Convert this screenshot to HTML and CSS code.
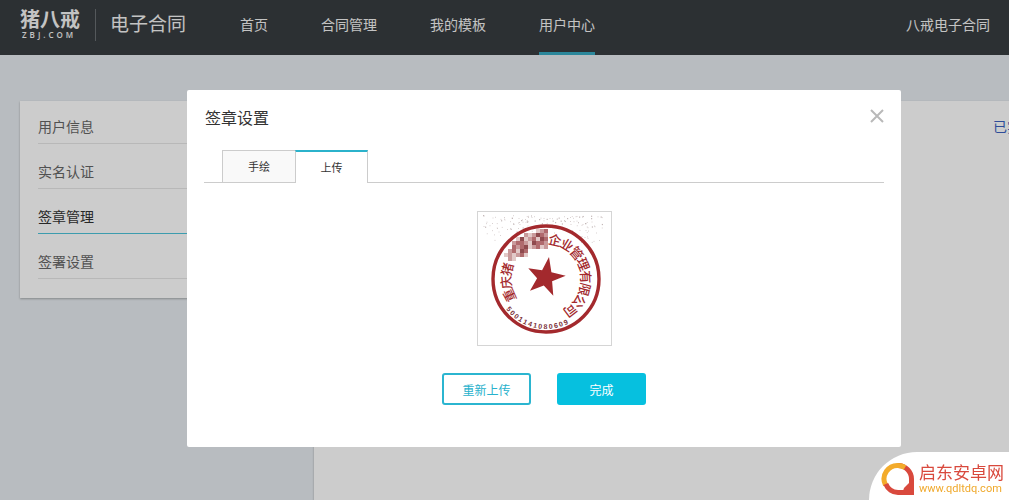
FILE: index.html
```html
<!DOCTYPE html>
<html lang="zh-CN">
  <head>
    <meta charset="utf-8" />
    <title>签章设置</title>
    <link rel="stylesheet" href="styles.css">
  </head>
  <body>
    <div class="page">
      <header class="header">
        <div class="logo">
          <span class="logo-name">猪八戒</span>
          <span class="logo-domain">ZBJ.COM</span>
        </div>
        <span class="product">电子合同</span>
        <nav class="nav">
          <a href="#">首页</a>
          <a href="#">合同管理</a>
          <a href="#">我的模板</a>
          <a href="#" class="active">用户中心</a>
        </nav>
        <span class="account">八戒电子合同</span>
      </header>

      <div class="content">
        <ul class="sidebar">
          <li><a href="#">用户信息</a></li>
          <li><a href="#">实名认证</a></li>
          <li class="active"><a href="#">签章管理</a></li>
          <li><a href="#">签署设置</a></li>
        </ul>
        <main class="panel">
          <a href="#">已实名认证</a>
        </main>
      </div>

      <div class="overlay">
        <div class="modal" role="dialog" aria-labelledby="modal-title">
          <div class="modal-head">
            <h2 id="modal-title">签章设置</h2>
            <button class="close" type="button" aria-label="关闭">
              <svg width="14" height="14" viewBox="0 0 14 14">
                <path d="M1 1L13 13M13 1L1 13" stroke="#b9b9b9" stroke-width="2" />
              </svg>
            </button>
          </div>
          <div class="tabs">
            <button class="tab" type="button">手绘</button>
            <button class="tab active" type="button">上传</button>
          </div>
          <div class="preview">
            <svg id="seal" viewBox="0 0 133 133">
              <g id="specks" fill="#c4b8b8"></g>
              <circle cx="68" cy="67" r="53" fill="none" stroke="#a3292d" stroke-width="3.4" />
              <polygon
                fill="#a3292d"
                points="71,45 73.4,60.2 87.7,63.7 74.1,69.2 75.3,83.7 65.8,73.6 52,78.7 59.1,66.2 50.3,56.3 64.1,58.2"
              />
              <g id="mosaic"></g>
              <g id="ring" class="seal-name" transform="translate(68 67)"></g>
              <g id="code" class="seal-code" transform="translate(68 67)"></g>
            </svg>
          </div>
          <div class="actions">
            <button class="btn" type="button">重新上传</button>
            <button class="btn primary" type="button">完成</button>
          </div>
        </div>
      </div>
    </div>

    <div class="site-mark">
      <svg width="34" height="36" viewBox="0 0 34 36" fill="none" stroke-width="5">
        <path d="M4.500 24A13.500 13.500 0 0 1 18 4.500" stroke="#f3ab2b" />
        <path d="M17 4.500A13.500 13.500 0 0 1 30.500 18V31.500H17A13.500 13.500 0 0 1 4.800 23" stroke="#d9493d" />
        <path d="M17 4.500A13.500 13.500 0 0 1 24 6.500" stroke="#f3ab2b" />
        <path d="M23 27L29 21V30H22Z" fill="#d9493d" />
      </svg>
      <div class="site-text">
        <span class="site-name">启东安卓网</span>
        <span class="site-url">www.qdltdq.com</span>
      </div>
    </div>

    <script>
      const NS = "http://www.w3.org/2000/svg";

      function addText(parentId, char, angle, y) {
        const text = document.createElementNS(NS, "text");
        text.setAttribute("transform", "rotate(" + angle + ")");
        text.setAttribute("y", y);
        text.textContent = char;
        document.getElementById(parentId).appendChild(text);
      }

      function addRect(parentId, x, y, size, fill) {
        const rect = document.createElementNS(NS, "rect");
        rect.setAttribute("x", x);
        rect.setAttribute("y", y);
        rect.setAttribute("width", size);
        rect.setAttribute("height", size);
        if (fill) rect.setAttribute("fill", fill);
        document.getElementById(parentId).appendChild(rect);
      }

      // Company name, clockwise from the left
      [..."重庆猪"].forEach((c, i) => addText("ring", c, 246 + i * 19, -35));
      [..."企业管理有限公司"].forEach((c, i) =>
        addText("ring", c, 13 + i * 18.5, -35)
      );

      // Registration number along the bottom
      [..."5001141080609"].forEach((c, i) =>
        addText("code", c, 51 - i * 6.3, 50)
      );

      // Covered part of the name, one letter per shade
      const shades = { a: "#c99a9b", b: "#b06a6d", c: "#e2c9c8", d: "#8f4a4e" };
      const rows = [
        "........cab",
        ".....acadba",
        "...cdcabcdb",
        "..abbacdbba",
        "..babdcabca",
        ".abcdb.....",
        "cacabc.....",
        ".ac........",
      ];
      rows.forEach((row, y) =>
        [...row].forEach((c, x) => {
          if (shades[c]) addRect("mosaic", 26 + x * 4, 17 + y * 4, 4, shades[c]);
        })
      );

      // Scan dust in the upper part of the picture
      for (let i = 0; i < 150; i++) {
        const x = (i * i * 7.3 + i * 37.7) % 120;
        const y = ((i * i * 3.1) % 29) * ((i % 3) + 1) / 3;
        addRect("specks", 5 + x, 3 + y, i % 4 ? 0.8 : 1.2);
      }
    </script>
  </body>
</html>
```
FILE: styles.css
```css
* {
  box-sizing: border-box;
}
html {
  height: 100%;
  overflow: hidden;
}
body {
  margin: 0;
  height: 100%;
  font-family: "Noto Sans CJK SC", sans-serif;
  font-size: 14px;
  line-height: 20px;
  color: #333;
}
a {
  color: inherit;
  text-decoration: none;
}
button {
  font-family: inherit;
  cursor: pointer;
}
.page {
  position: relative;
  display: flex;
  flex-direction: column;
  min-width: 1088px;
  min-height: 100%;
  background-color: #e7ecf0;
}

/* header */
.header {
  display: flex;
  align-items: center;
  height: 55px;
  padding: 0 98px 0 20px;
  background-color: #383d40;
  color: #f4f4f4;
}
.logo {
  display: flex;
  flex-direction: column;
  width: 76px;
  margin-bottom: 6px;
  border-right: 1px solid #6a6f72;
}
.logo-name {
  font-size: 20px;
  font-weight: 700;
  line-height: 20px;
}
.logo-domain {
  font-family: "Open Sans", sans-serif;
  font-size: 8px;
  font-weight: 600;
  line-height: 12px;
  letter-spacing: 3px;
  padding-left: 2px;
}
.product {
  margin: 0 54px 10px 14px;
  font-size: 19px;
}
.nav {
  display: flex;
  gap: 53px;
  height: 100%;
}
.nav a {
  padding-top: 14px;
}
.nav .active {
  border-bottom: 3px solid #36a9c2;
}
.account {
  margin-left: auto;
  margin-bottom: 8px;
}

/* page behind the dialog */
.content {
  display: flex;
  flex: 1;
  align-items: flex-start;
  gap: 20px;
  padding: 46px 20px 0;
}
.sidebar {
  display: flex;
  flex-direction: column;
  gap: 17px;
  width: 274px;
  margin: 0;
  padding: 15px 18px 19px;
  list-style: none;
  color: #666;
  background-color: #fff;
  box-shadow: 0 1px 2px #a5a9ac;
}
.sidebar li {
  padding-bottom: 7px;
  border-bottom: 1px solid #e6e6e6;
}
.sidebar .active {
  color: #333;
  border-bottom-color: #4cc4da;
}
.panel {
  flex: 1;
  align-self: stretch;
  padding: 15px 5px;
  text-align: right;
  color: #3a5fc0;
  background-color: #fff;
  box-shadow: 0 1px 2px #a5a9ac;
}

/* dialog */
.overlay {
  position: absolute;
  inset: 0;
  display: flex;
  justify-content: center;
  align-items: flex-start;
  padding-top: 90px;
  background-color: rgba(0, 0, 0, 0.2);
}
.modal {
  width: 714px;
  padding: 15px 17px 42px;
  background-color: #fff;
  border-radius: 2px;
}
.modal-head {
  display: flex;
  justify-content: space-between;
  align-items: center;
  height: 24px;
  padding-left: 1px;
}
.modal-head h2 {
  margin: 0;
  font-size: 16px;
  font-weight: 400;
}
.close {
  display: flex;
  padding: 0 0 2px;
  border: none;
  background: none;
}
.tabs {
  display: flex;
  height: 33px;
  margin-top: 21px;
  padding-left: 18px;
  border-bottom: 1px solid #ccc;
}
.tab {
  width: 73px;
  height: 32px;
  padding: 0 0 2px;
  font-size: 11px;
  color: #333;
  background-color: #f9f9f9;
  border: 1px solid #ccc;
  border-width: 1px 0 0 1px;
}
.tab.active {
  height: 33px;
  background-color: #fff;
  border-width: 2px 1px 0;
  border-top-color: #2bb2cb;
}
.preview {
  width: 135px;
  height: 135px;
  margin: 28px auto 0;
  border: 1px solid #d5d5d5;
}
.preview svg {
  display: block;
}
.seal-name {
  font-size: 13px;
  font-weight: 500;
  fill: #a3292d;
  text-anchor: middle;
}
.seal-code {
  font-family: "Liberation Sans", sans-serif;
  font-size: 7px;
  font-weight: 700;
  fill: #7a3038;
  text-anchor: middle;
}
.actions {
  display: flex;
  justify-content: center;
  gap: 26px;
  margin-top: 27px;
}
.btn {
  width: 89px;
  height: 32px;
  padding: 0;
  font-size: 12px;
  color: #27b1cc;
  background-color: #fff;
  border: 2px solid #2bb5d0;
  border-radius: 3px;
}
.btn.primary {
  color: #fff;
  background-color: #06c0df;
  border-color: #06c0df;
}

/* corner mark */
.site-mark {
  position: fixed;
  right: 0;
  bottom: 0;
  display: flex;
  align-items: center;
  gap: 4px;
  height: 48px;
  padding: 6px 5px 0 12px;
  background-color: #fff;
  border-top-left-radius: 48px;
}
.site-text {
  display: flex;
  flex-direction: column;
}
.site-name {
  font-size: 17px;
  line-height: 20px;
  color: #d9493d;
}
.site-url {
  font-family: Roboto, sans-serif;
  font-size: 11px;
  line-height: 14px;
  color: #f0a92c;
}
```
